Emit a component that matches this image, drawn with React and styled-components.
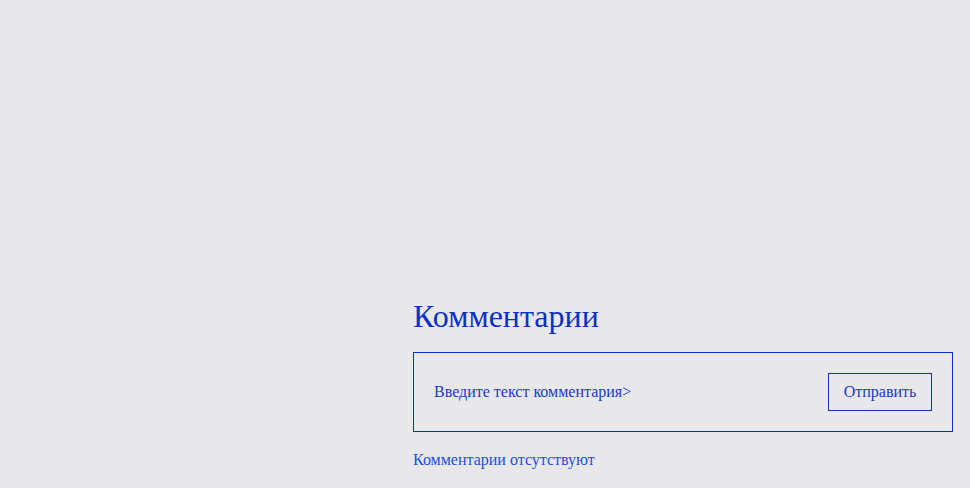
import React from "react";
import styled, { createGlobalStyle } from "styled-components";

const GlobalStyle = createGlobalStyle`
  html, body {
    margin: 0;
    padding: 0;
    background: #e8e8ea;
  }
  body {
    font-family: "Liberation Serif", "Times New Roman", serif;
  }
`;

const Page = styled.div`
  display: grid;
  grid-template-columns: 1fr 540px;
  min-height: 488px;
  padding: 0 17px 0 0;
  box-sizing: border-box;
`;

const Comments = styled.section`
  grid-column: 2;
  display: flex;
  flex-direction: column;
  padding-top: 296px;
`;

const Title = styled.h2`
  font-size: 32px;
  font-weight: 400;
  color: #0a30c8;
  margin: 0 0 16px;
  line-height: 40px;
`;

const Form = styled.form`
  display: flex;
  align-items: center;
  justify-content: space-between;
  height: 80px;
  box-sizing: border-box;
  border: 1px solid #0a30c8;
  padding: 0 20px;
`;

const Input = styled.input`
  flex: 1;
  border: none;
  background: transparent;
  outline: none;
  font-family: inherit;
  font-size: 16px;
  color: #0a30c8;
  padding: 0;

  &::placeholder {
    color: #1838c8;
    opacity: 1;
  }
`;

const SendButton = styled.button`
  width: 104px;
  height: 38px;
  border: 1px solid #0a30c8;
  background: transparent;
  font-family: inherit;
  font-size: 16px;
  color: #1838c8;
  cursor: pointer;
`;

const Empty = styled.p`
  margin: 19px 0 0;
  font-size: 16px;
  color: #1a4ee0;
`;

export default function App() {
  return (
    <>
      <GlobalStyle />
      <Page>
        <Comments>
          <Title>Комментарии</Title>
          <Form onSubmit={(e) => e.preventDefault()}>
            <Input placeholder="Введите текст комментария>" />
            <SendButton type="submit">Отправить</SendButton>
          </Form>
          <Empty>Комментарии отсутствуют</Empty>
        </Comments>
      </Page>
    </>
  );
}
